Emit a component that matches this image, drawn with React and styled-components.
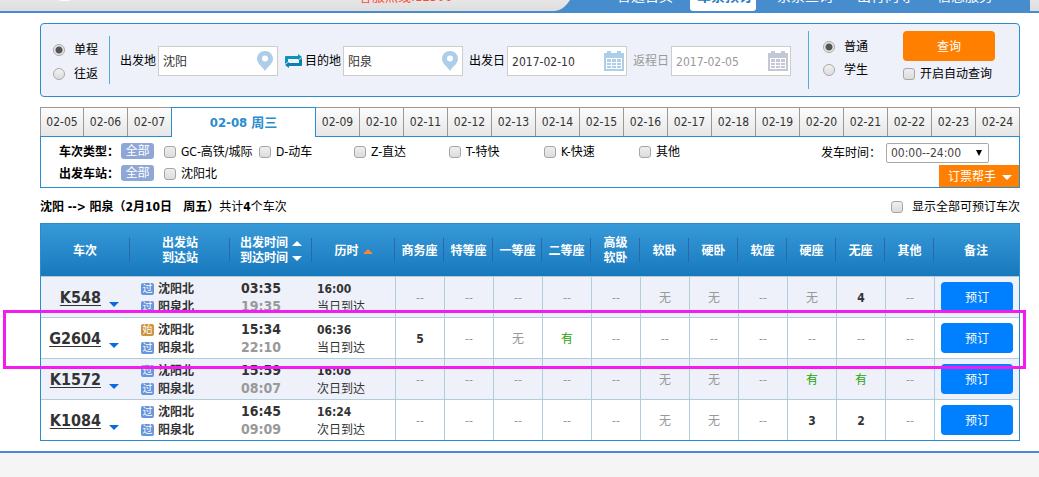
import React from "react";
import styled, { createGlobalStyle, css } from "styled-components";

const BLUE = "#298cce";
const ORANGE = "#ff8000";

const GlobalStyle = createGlobalStyle`
  *, *::before, *::after { box-sizing: border-box; }
  body {
    margin: 0;
    background: #fff;
    color: #000;
    font: 12px/18px "DejaVu Sans Condensed", "Noto Sans CJK SC", sans-serif;
  }
  button, input, select { font: inherit; margin: 0; }
  button { border: 0; padding: 0; cursor: pointer; }
  a { color: inherit; text-decoration: none; }
`;

const Page = styled.div`
  display: flex;
  flex-direction: column;
  min-height: 100vh;
`;

/* ---------- top bar ---------- */

const TopBar = styled.header`
  display: flex;
  align-items: flex-end;
  height: 13px;
  overflow: hidden;
  border-bottom: 2px solid #478ccd;
  background: linear-gradient(#e6e6e6, #dedede);
`;

const LogoEdge = styled.svg`
  align-self: flex-start;
  margin-left: 58px;
`;

const Hotline = styled.span`
  margin: 0 auto 5px 288px;
  color: #ff4a32;
  font-size: 13px;
  white-space: nowrap;
`;

const NavCurve = styled.svg`
  flex: none;
`;

const Nav = styled.nav`
  display: flex;
  align-items: flex-end;
  height: 11px;
  margin-right: 9px;
  padding: 0 25px 0 32px;
  background: #478ccd;
`;

const NavLink = styled.a`
  margin: 0 7px;
  padding: 0 5px 6px;
  color: #fff;
  font-size: 14px;
  white-space: nowrap;
  ${(p) =>
    p.$active &&
    css`
      margin: 0 9px 0 5px;
      padding: 0 3px 6px 7px;
      border-radius: 0 0 3px 3px;
      background: #fff;
      color: #2a7cc4;
      font-weight: bold;
    `}
`;

const Content = styled.main`
  padding: 10px 19px 10px 40px;
`;

/* ---------- form controls ---------- */

const Radio = styled.input.attrs({ type: "radio" })`
  appearance: none;
  flex: none;
  width: 12px;
  height: 12px;
  border: 1px solid #a9a9a9;
  border-radius: 50%;
  background: linear-gradient(#f2f2f2, #dcdcdc);
  &:checked {
    background: radial-gradient(circle, #555 0 3px, #e8e8e8 4px);
  }
`;

const Checkbox = styled.input.attrs({ type: "checkbox" })`
  appearance: none;
  flex: none;
  width: 12px;
  height: 12px;
  border: 1px solid #a6a6a6;
  border-radius: 3px;
  background: linear-gradient(#eee, #dcdcdc);
`;

const Choice = styled.label`
  display: flex;
  align-items: center;
  gap: ${(p) => p.$gap || 5}px;
  white-space: nowrap;
`;

/* ---------- search panel ---------- */

const SearchPanel = styled.form`
  display: flex;
  align-items: center;
  height: 74px;
  padding: 0 24px 0 12px;
  border: 1px solid ${BLUE};
  border-radius: 4px;
  background: #eef1fa;
`;

const ChoiceColumn = styled.fieldset`
  display: flex;
  flex-direction: column;
  gap: ${(p) => p.$gap}px;
  margin: 0;
  padding: ${(p) => (p.$raised ? "0 0 3px" : "3px 0 0")};
  border: 0;
`;

const Divider = styled.div`
  width: 1px;
  height: ${(p) => p.$height}px;
  margin: 0 ${(p) => p.$after}px 0 11px;
  background: #55aadd;
`;

const Field = styled.label`
  display: flex;
  align-items: center;
  gap: 2px;
  margin-top: 2px;
  color: ${(p) => (p.$muted ? "#999" : "#000")};
  white-space: nowrap;
`;

const InputBox = styled.span`
  display: flex;
  align-items: center;
  width: 120px;
  height: 30px;
  padding: 0 2px 0 4px;
  border: 1px solid #cfcdc7;
  background: #fff;
`;

const TextInput = styled.input`
  flex: 1;
  min-width: 0;
  padding: 2px 0 0;
  border: 0;
  outline: 0;
  background: none;
  color: ${(p) => (p.$muted ? "#999" : "#333")};
`;

const SwapButton = styled.button`
  display: flex;
  margin: 2px 3px 0 7px;
  background: none;
`;

const Spacer = styled.div`
  width: 6px;
`;

const SubmitColumn = styled.div`
  display: flex;
  flex-direction: column;
  gap: 4px;
  margin-left: auto;
  padding-bottom: 6px;
`;

const SearchButton = styled.button`
  width: 92px;
  height: 30px;
  padding-top: 2px;
  border-radius: 4px;
  background: ${ORANGE};
  color: #fff;
`;

/* ---------- date tabs ---------- */

const DateTabs = styled.div`
  display: grid;
  grid-template-columns: repeat(3, 44fr) 144fr repeat(16, 44fr);
  grid-template-rows: 29px;
  margin-top: 10px;
`;

const DateTab = styled.button`
  min-width: 0;
  border: solid #999;
  border-width: 1px 1px 0 0;
  background: linear-gradient(#fcfcfc, #e6e6e6);
  color: #333;
  &:first-child { border-left-width: 1px; }
  ${(p) =>
    p.$active &&
    css`
      position: relative;
      height: 30px;
      margin-left: -1px;
      border-color: ${BLUE};
      border-width: 1px 1px 0 1px;
      background: #fff;
      color: ${BLUE};
      font-size: 13px;
      font-weight: bold;
    `}
`;

/* ---------- filters ---------- */

const FilterPanel = styled.section`
  display: flex;
  justify-content: space-between;
  height: 52px;
  border: 1px solid ${BLUE};
`;

const FilterRows = styled.div`
  display: flex;
  flex-direction: column;
  gap: 6px;
  padding: 6px 0 0 18px;
`;

const FilterRow = styled.div`
  display: flex;
  height: 16px;
  line-height: 18px;
`;

const FilterName = styled.strong`
  width: 62px;
  white-space: nowrap;
`;

const AllButton = styled.button`
  width: 33px;
  height: 16px;
  margin-right: 10px;
  border-radius: 3px;
  background: #8ea7d6;
  color: #fff;
  line-height: 16px;
`;

const FilterChoice = styled(Choice)`
  width: 95px;
  height: 18px;
`;

const FilterSide = styled.div`
  display: flex;
  flex-direction: column;
  align-items: flex-end;
  gap: 2px;
  padding-top: 6px;
`;

const TimeFilter = styled.label`
  display: flex;
  align-items: center;
  gap: 5px;
  margin-right: 30px;
  white-space: nowrap;
`;

const SelectBox = styled.span`
  display: grid;
  align-items: center;
  width: 103px;
  height: 20px;
  border: 1px solid #a9a9a9;
  border-radius: 2px;
  & > * { grid-area: 1 / 1; }
  & > svg { justify-self: end; margin-right: 6px; pointer-events: none; }
`;

const Select = styled.select`
  appearance: none;
  width: 100%;
  padding: 0 4px;
  border: 0;
  outline: 0;
  background: none;
  color: #444;
`;

const HelpButton = styled.button`
  display: flex;
  align-items: center;
  justify-content: flex-end;
  gap: 6px;
  width: 80px;
  height: 22px;
  padding: 2px 7px 0 0;
  background: ${ORANGE};
  color: #fff;
`;

/* ---------- results ---------- */

const SummaryRow = styled.div`
  display: flex;
  justify-content: space-between;
  padding: 10px 0 7px;
`;

const Results = styled.div`
  position: relative;
  border: 1px solid ${BLUE};
`;

const Highlight = styled.div`
  position: absolute;
  top: 86px;
  right: -7px;
  left: -38px;
  height: 59px;
  border: 3px solid #f31cee;
  pointer-events: none;
`;

const Table = styled.table`
  width: 100%;
  border-spacing: 0;
  table-layout: fixed;
`;

const HeadRow = styled.tr`
  height: 52px;
  background: linear-gradient(#379ad8, #1878bd);
`;

const HeadCell = styled.th`
  padding: 2px 2px 0 0;
  color: #fff;
  line-height: 15px;
  ${(p) =>
    !p.$last &&
    css`
      background: linear-gradient(#2c67a9, #2c67a9) right 1px center / 1px 24px no-repeat;
    `}
`;

const SortStack = styled.span`
  display: inline-flex;
  flex-direction: column;
`;

const SortLabel = styled.span`
  display: inline-flex;
  align-items: center;
  gap: 4px;
`;

const BodyRow = styled.tr`
  height: 41px;
  color: #333;
  &:nth-child(odd) { background: #eef1fa; }
`;

const Cell = styled.td`
  padding: 2px 0 0 ${(p) => p.$indent || 0}px;
  border-top: 1px solid #b0cddb;
  line-height: 18px;
  white-space: nowrap;
`;

const ClockCell = styled(Cell)`
  padding-top: 0;
`;

const DurationCell = styled(Cell)`
  border-right: 1px solid #b0cddb;
`;

const SEAT_COLORS = { 无: "#999", "--": "#999", 有: "#26a306" };

const SeatCell = styled(Cell)`
  border-right: 1px solid #b0cddb;
  color: ${(p) => SEAT_COLORS[p.$value] || "#333"};
  font-weight: ${(p) => (SEAT_COLORS[p.$value] ? "normal" : "bold")};
  text-align: center;
`;

const TrainLine = styled.div`
  display: flex;
  align-items: center;
  justify-content: flex-end;
  gap: 8px;
  padding-right: 12px;
`;

const TrainLink = styled.a`
  font-size: 16px;
  font-weight: bold;
  text-decoration: underline 1px;
  text-underline-offset: 2px;
`;

const ToggleButton = styled.button`
  display: flex;
  padding-top: 12px;
  background: none;
`;

const Station = styled.div`
  display: flex;
  align-items: center;
  gap: 4px;
  font-weight: bold;
`;

const StopBadge = styled.span`
  width: 13px;
  height: 12px;
  border-radius: 2px;
  background: ${(p) => (p.$kind === "始" ? "#cc9440" : "#6896dc")};
  color: #fff;
  font-size: 10px;
  font-weight: normal;
  line-height: 12px;
  text-align: center;
`;

const Clock = styled.div`
  color: ${(p) => (p.$muted ? "#999" : "#333")};
  font-size: 14px;
  font-weight: bold;
`;

const BookCell = styled(Cell)`
  padding-top: 0;
  text-align: center;
`;

const BookButton = styled.button`
  width: 72px;
  height: 30px;
  padding-top: 2px;
  border-radius: 4px;
  background: #007fff;
  color: #fff;
  vertical-align: middle;
`;

const Footer = styled.footer`
  flex: 1;
  border-top: 2px solid #478ccd;
  background: #f5f5f5;
`;

/* ---------- drawings ---------- */

const PinIcon = () => (
  <svg width="20" height="20" viewBox="0 0 20 20" aria-hidden="true">
    <path d="M10 0C5.500 0 2 3.400 2 7.800C2 12.500 7 15.500 10 20C13 15.500 18 12.500 18 7.800C18 3.400 14.500 0 10 0Z" fill="#aecde8" />
    <circle cx="10" cy="7.500" r="3" fill="#fff" />
  </svg>
);

const CalendarIcon = ({ color = "#aecde8" }) => (
  <svg width="20" height="20" viewBox="0 0 20 20" aria-hidden="true" shapeRendering="crispEdges">
    <path d="M0 2H3V0H7V2H13V0H17V2H20V20H0Z" fill={color} />
    <path d="M2 7H18V18H2Z" fill="#fff" />
    <path
      d="M3 8H7V11H3ZM8 8H12V11H8ZM13 8H17V11H13ZM3 12H7V14H3ZM8 12H12V14H8ZM13 12H17V14H13ZM3 15H7V17H3ZM8 15H12V17H8ZM13 15H17V17H13Z"
      fill={color}
    />
  </svg>
);

const SwapIcon = () => (
  <svg width="17" height="14" viewBox="0 0 17 14" aria-hidden="true">
    <path d="M0 10V3Q0 2 1 2H13V0L17 3L13 6V5H3V8Z" fill="#0a94bd" />
    <path d="M17 4V11Q17 12 16 12H4V14L0 11L4 8V9H14V6Z" fill="#0a7fb0" />
  </svg>
);

const Triangle = ({ up, color = "#fff", width = 10, height = 5 }) => (
  <svg width={width} height={height} viewBox="0 0 10 5" preserveAspectRatio="none" aria-hidden="true">
    <path d={up ? "M0 5L5 0L10 5Z" : "M0 0H10L5 5Z"} fill={color} />
  </svg>
);

/* ---------- data ---------- */

const NAV = ["普通首页", "车票预订", "余票查询", "出行向导", "信息服务"];
const DATES = [
  "02-05", "02-06", "02-07", "02-08 周三", "02-09", "02-10", "02-11", "02-12", "02-13", "02-14",
  "02-15", "02-16", "02-17", "02-18", "02-19", "02-20", "02-21", "02-22", "02-23", "02-24",
];
const TYPES = ["GC-高铁/城际", "D-动车", "Z-直达", "T-特快", "K-快速", "其他"];
const SEATS = ["商务座", "特等座", "一等座", "二等座", "高级\n软卧", "软卧", "硬卧", "软座", "硬座", "无座", "其他"];
const NONE = "--";
const TRAINS = [
  { no: "K548", kind: "过", start: "03:35", end: "19:35", time: "16:00", day: "当日到达",
    seats: [NONE, NONE, NONE, NONE, NONE, "无", "无", NONE, "无", "4", NONE] },
  { no: "G2604", kind: "始", start: "15:34", end: "22:10", time: "06:36", day: "当日到达",
    seats: ["5", NONE, "无", "有", NONE, NONE, NONE, NONE, NONE, NONE, NONE] },
  { no: "K1572", kind: "过", start: "15:59", end: "08:07", time: "16:08", day: "次日到达",
    seats: [NONE, NONE, NONE, NONE, NONE, "无", "无", NONE, "有", "有", NONE] },
  { no: "K1084", kind: "过", start: "16:45", end: "09:09", time: "16:24", day: "次日到达",
    seats: [NONE, NONE, NONE, NONE, NONE, "无", "无", NONE, "3", "2", NONE] },
];
const COLUMNS = [90, 100, 82, 83, ...SEATS.map(() => 49), 84];

const LabeledInput = ({ label, value, icon, muted }) => (
  <Field $muted={muted}>
    {label}
    <InputBox>
      <TextInput defaultValue={value} $muted={muted} />
      {icon}
    </InputBox>
  </Field>
);

const TrainRow = ({ train }) => (
  <BodyRow>
    <Cell>
      <TrainLine>
        <TrainLink href="#">{train.no}</TrainLink>
        <ToggleButton type="button" aria-label={train.no}>
          <Triangle color="#0a6be0" />
        </ToggleButton>
      </TrainLine>
    </Cell>
    <Cell $indent={10}>
      <Station><StopBadge $kind={train.kind}>{train.kind}</StopBadge>沈阳北</Station>
      <Station><StopBadge $kind="过">过</StopBadge>阳泉北</Station>
    </Cell>
    <ClockCell $indent={10}>
      <Clock>{train.start}</Clock>
      <Clock $muted>{train.end}</Clock>
    </ClockCell>
    <DurationCell $indent={4}>
      <strong>{train.time}</strong>
      <div>{train.day}</div>
    </DurationCell>
    {train.seats.map((seat, i) => (
      <SeatCell key={i} $value={seat}>{seat}</SeatCell>
    ))}
    <BookCell><BookButton type="button">预订</BookButton></BookCell>
  </BodyRow>
);

export default function App() {
  return (
    <Page>
      <GlobalStyle />
      <TopBar>
        <LogoEdge width="13" height="2" viewBox="0 0 13 2" aria-hidden="true">
          <path d="M0 0H13Q10 1 8 1H5Q2 1 0 0Z" fill="#fff" />
        </LogoEdge>
        <Hotline>客服热线:12306</Hotline>
        <NavCurve width="18" height="11" viewBox="0 0 18 11" aria-hidden="true">
          <path d="M18 0H15Q9 10 0 11H18Z" fill="#478ccd" />
        </NavCurve>
        <Nav>
          {NAV.map((name, i) => (
            <NavLink key={name} href="#" $active={i === 1}>{name}</NavLink>
          ))}
        </Nav>
      </TopBar>

      <Content>
        <SearchPanel onSubmit={(e) => e.preventDefault()}>
          <ChoiceColumn $gap={6}>
            <Choice $gap={9}><Radio name="trip" defaultChecked />单程</Choice>
            <Choice $gap={9}><Radio name="trip" />往返</Choice>
          </ChoiceColumn>
          <Divider $height={48} $after={10} />
          <LabeledInput label="出发地" value="沈阳" icon={<PinIcon />} />
          <SwapButton type="button" aria-label="交换"><SwapIcon /></SwapButton>
          <LabeledInput label="目的地" value="阳泉" icon={<PinIcon />} />
          <Spacer />
          <LabeledInput label="出发日" value="2017-02-10" icon={<CalendarIcon />} />
          <Spacer />
          <LabeledInput label="返程日" value="2017-02-05" icon={<CalendarIcon color="#c3c7d6" />} muted />
          <Spacer />
          <Divider $height={58} $after={14} />
          <ChoiceColumn $gap={5} $raised>
            <Choice $gap={9}><Radio name="kind" defaultChecked />普通</Choice>
            <Choice $gap={9}><Radio name="kind" />学生</Choice>
          </ChoiceColumn>
          <SubmitColumn>
            <SearchButton type="submit">查询</SearchButton>
            <Choice><Checkbox />开启自动查询</Choice>
          </SubmitColumn>
        </SearchPanel>

        <DateTabs>
          {DATES.map((date) => (
            <DateTab key={date} type="button" $active={date.length > 5}>{date}</DateTab>
          ))}
        </DateTabs>

        <FilterPanel>
          <FilterRows>
            <FilterRow>
              <FilterName>车次类型：</FilterName>
              <AllButton type="button">全部</AllButton>
              {TYPES.map((type) => (
                <FilterChoice key={type}><Checkbox />{type}</FilterChoice>
              ))}
            </FilterRow>
            <FilterRow>
              <FilterName>出发车站：</FilterName>
              <AllButton type="button">全部</AllButton>
              <FilterChoice><Checkbox />沈阳北</FilterChoice>
            </FilterRow>
          </FilterRows>
          <FilterSide>
            <TimeFilter>
              发车时间：
              <SelectBox>
                <Select><option>00:00--24:00</option></Select>
                <Triangle color="#000" width={6} height={6} />
              </SelectBox>
            </TimeFilter>
            <HelpButton type="button">订票帮手<Triangle /></HelpButton>
          </FilterSide>
        </FilterPanel>

        <SummaryRow>
          <span>
            <strong>沈阳 --&gt; 阳泉（2月10日&nbsp;&nbsp; 周五）</strong>共计<strong>4</strong>个车次
          </span>
          <Choice $gap={9}><Checkbox />显示全部可预订车次</Choice>
        </SummaryRow>

        <Results>
          <Table>
            <colgroup>
              {COLUMNS.map((width, i) => <col key={i} width={width} />)}
            </colgroup>
            <thead>
              <HeadRow>
                <HeadCell>车次</HeadCell>
                <HeadCell>出发站<br />到达站</HeadCell>
                <HeadCell>
                  <SortStack>
                    <SortLabel>出发时间<Triangle up /></SortLabel>
                    <SortLabel>到达时间<Triangle /></SortLabel>
                  </SortStack>
                </HeadCell>
                <HeadCell><SortLabel>历时<Triangle up color="#f58a36" /></SortLabel></HeadCell>
                {SEATS.map((seat, i) => (
                  <HeadCell key={i}>
                    {seat.split("\n").map((line) => <div key={line}>{line}</div>)}
                  </HeadCell>
                ))}
                <HeadCell $last>备注</HeadCell>
              </HeadRow>
            </thead>
            <tbody>
              {TRAINS.map((train) => <TrainRow key={train.no} train={train} />)}
            </tbody>
          </Table>
          <Highlight />
        </Results>
      </Content>
      <Footer />
    </Page>
  );
}
